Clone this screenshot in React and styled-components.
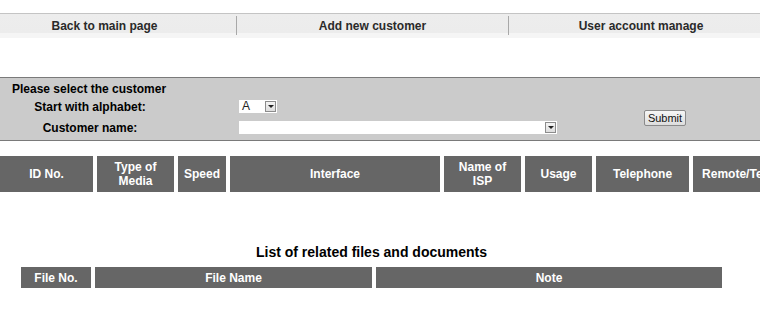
import React from 'react'
import styled, {createGlobalStyle} from 'styled-components'

const GlobalStyle = createGlobalStyle`
    html, body {
        margin: 0;
        padding: 0;
        background: #fff;
        overflow: hidden;
    }
    body {
        font-family: "Liberation Sans", Arial, sans-serif;
        font-size: 12px;
        color: #000;
    }
`

const Page = styled.div`
    width: 760px;
    padding-top: 13px;
`

const NavBar = styled.div`
    display: grid;
    grid-template-columns: 236px 272px 1fr;
    height: 24px;
    border-top: 1px solid #c4c4c4;
    background: linear-gradient(#ededed 0, #ececec 80%, #f5f5f5 80%, #f5f5f5 100%);
`

const NavItem = styled.div`
    display: flex;
    align-items: center;
    justify-content: center;
    padding: 2px ${({pr}) => pr || 0}px 1px ${({pl}) => pl || 0}px;
    font-weight: bold;
    color: #2a2a2a;
    border-left: ${({first}) => first ? 'none' : '1px solid #a8a8a8'};
    margin: 2px 0 3px;
`

const SelectPanel = styled.div`
    margin-top: 39px;
    height: 62px;
    background: #cbcbcb;
    border-top: 1px solid #7a7a7a;
    border-bottom: 1px solid #7a7a7a;
`

const PanelTitle = styled.div`
    padding: 4px 0 0 12px;
    height: 14px;
    font-weight: bold;
`

const FormGrid = styled.div`
    display: grid;
    grid-template-columns: 180px 59px 405px 1fr;
    grid-template-rows: 21px 21px;
    align-items: center;
`

const Label = styled.div`
    font-weight: bold;
    text-align: center;
    grid-column: 1;
`

const Field = styled.div`
    grid-column: 3;
    display: flex;
`

const SelectBox = styled.div`
    position: relative;
    width: ${({w}) => w}px;
    height: 13px;
    background: #fff;
    font-size: 12px;
    line-height: 13px;
    padding-left: 3px;
    box-sizing: border-box;
    color: #222;
`

const Arrow = styled.div`
    position: absolute;
    right: 1px;
    top: 1px;
    width: 11px;
    height: 11px;
    box-sizing: border-box;
    border: 1px solid #8c8c8c;
    background: linear-gradient(#f4f4f4, #dedede);
    display: flex;
    align-items: center;
    justify-content: center;

    &::after {
        content: '';
        border-left: 3px solid transparent;
        border-right: 3px solid transparent;
        border-top: 3px solid #222;
    }
`

const SubmitCell = styled.div`
    grid-column: 4;
    grid-row: 1 / span 2;
    display: flex;
    align-items: center;
`

const SubmitButton = styled.button`
    font-family: "Liberation Sans", Arial, sans-serif;
    font-size: 11px;
    height: 16px;
    width: 42px;
    padding: 0;
    margin-top: 2px;
    color: #111;
    border: 1px solid #8a8a8a;
    border-radius: 2px;
    background: linear-gradient(#f6f6f6, #dddddd);
`

const HeaderRow = styled.div`
    display: grid;
    grid-template-columns: ${({cols}) => cols};
    column-gap: 4px;
    width: ${({w}) => w}px;
    margin: ${({m}) => m};
`

const HeadCell = styled.div`
    background: #666;
    color: #fff;
    font-weight: bold;
    height: ${({h}) => h}px;
    display: flex;
    align-items: center;
    justify-content: center;
    text-align: center;
    line-height: 14px;
    white-space: nowrap;
`

const ListTitle = styled.div`
    width: 743px;
    margin-top: 52px;
    text-align: center;
    font-size: 14px;
    font-weight: bold;
    height: 18px;
`

const mainCols = [
    'ID No.',
    <>Type of<br/>Media</>,
    'Speed',
    'Interface',
    <>Name of<br/>ISP</>,
    'Usage',
    'Telephone',
    'Remote/Telnet'
]

const fileCols = ['File No.', 'File Name', 'Note']

export default function App() {
    return (
        <Page>
            <GlobalStyle/>
            <NavBar>
                <NavItem first pr={27}>Back to main page</NavItem>
                <NavItem>Add new customer</NavItem>
                <NavItem pl={13}>User account manage</NavItem>
            </NavBar>

            <SelectPanel>
                <PanelTitle>Please select the customer</PanelTitle>
                <FormGrid>
                    <Label>Start with alphabet:</Label>
                    <Field>
                        <SelectBox w={38}>A<Arrow/></SelectBox>
                    </Field>
                    <SubmitCell>
                        <SubmitButton>Submit</SubmitButton>
                    </SubmitCell>
                    <Label>Customer name:</Label>
                    <Field>
                        <SelectBox w={318}><Arrow/></SelectBox>
                    </Field>
                </FormGrid>
            </SelectPanel>

            <HeaderRow cols="93px 77px 48px 210px 77px 67px 93px 100px" w={800} m="15px 0 0 0">
                {mainCols.map((c, i) => <HeadCell key={i} h={36}>{c}</HeadCell>)}
            </HeaderRow>

            <ListTitle>List of related files and documents</ListTitle>

            <HeaderRow cols="70px 277px 1fr" w={701} m="5px 0 0 21px">
                {fileCols.map(c => <HeadCell key={c} h={21}>{c}</HeadCell>)}
            </HeaderRow>
        </Page>
    )
}
